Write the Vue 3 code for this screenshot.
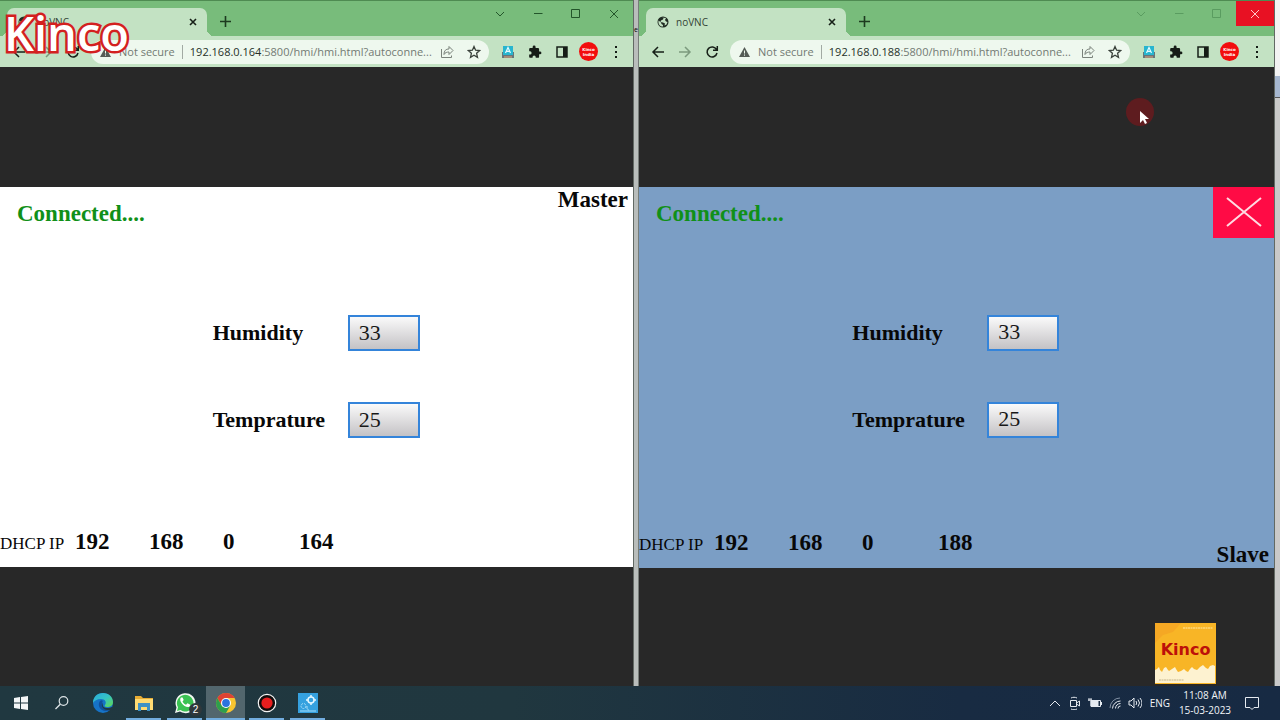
<template>
  <div class="desktop">
    <main class="workspace">
      <template v-for="win in windows" :key="win.id">
        <section class="window" :class="win.id">
          <header class="titlebar">
            <div class="tab">
              <svg class="favicon" viewBox="0 0 24 24">
                <circle cx="12" cy="12" r="11" fill="#202b22" />
                <path d="M3 9l5 4 1 3 3 2v3C6 21 2 17 3 9zM9 3l4 1-1 3-4 2-1 3 5 1 4 2-1 4 4-2 2-5-3-1-2-3 2-4z" fill="#c3e2c3" />
              </svg>
              <span class="tab-title">noVNC</span>
              <button class="tab-close" aria-label="Close tab">
                <svg width="8" height="8" viewBox="0 0 8 8"><path d="M1 1l6 6M7 1l-6 6" stroke="#172018" stroke-width="1.6" /></svg>
              </button>
            </div>
            <button class="new-tab" aria-label="New tab">
              <svg width="11" height="11" viewBox="0 0 11 11"><path d="M5.5 0v11M0 5.5h11" stroke="#1d3a1f" stroke-width="1.6" /></svg>
            </button>
            <div class="controls">
              <button aria-label="Search tabs"><svg width="12" height="12" viewBox="0 0 12 12"><path d="M2 4l4 4 4-4" /></svg></button>
              <button aria-label="Minimize"><svg width="12" height="12" viewBox="0 0 12 12"><path d="M2 5.500h8.500" /></svg></button>
              <button aria-label="Maximize"><svg width="12" height="12" viewBox="0 0 12 12"><path d="M1.500 1.500h8v8h-8z" /></svg></button>
              <button class="close" aria-label="Close"><svg width="12" height="12" viewBox="0 0 12 12"><path d="M2 2l8 8M10 2l-8 8" /></svg></button>
            </div>
          </header>

          <nav class="toolbar">
            <button class="tool" aria-label="Back">
              <svg width="14" height="14" viewBox="0 0 14 14"><path d="M13 7H2M7 2L2 7l5 5" /></svg>
            </button>
            <button class="tool dim" aria-label="Forward">
              <svg width="14" height="14" viewBox="0 0 14 14"><path d="M1 7h11M7 2l5 5-5 5" /></svg>
            </button>
            <button class="tool" aria-label="Reload">
              <svg width="14" height="14" viewBox="0 0 14 14"><path d="M11.500 4.500A5 5 0 1 0 12 8M12.300 1v4.300H8" /></svg>
            </button>
            <div class="omnibox">
              <svg class="warn" width="11" height="10" viewBox="0 0 11 10"><path d="M5.500 0L11 10H0z" fill="#555c56" /><path d="M5.500 3.500v3M5.500 7.500v1.200" stroke="#eef8ee" /></svg>
              <span class="insecure">Not secure</span>
              <span class="url"><b>{{ win.ip }}</b>:5800/hmi/hmi.html?autoconne...</span>
              <button aria-label="Share">
                <svg width="14" height="14" viewBox="0 0 14 14"><path d="M1.500 4v8.500h10v-2M4 9.500c0-4 2-5.500 5-5.500V1.500l4 4-4 4V7C7 7 5 7.500 4 9.500z" /></svg>
              </button>
              <button aria-label="Bookmark">
                <svg width="14" height="14" viewBox="0 0 14 14"><path class="star" d="M7 1.500l1.600 3.700 4 .4-3 2.700.9 4L7 10.200l-3.500 2.100.9-4-3-2.700 4-.4z" /></svg>
              </button>
            </div>
            <button class="tool" aria-label="Extension">
              <svg width="14" height="14" viewBox="0 0 14 14">
                <path d="M1 7h12v6H1z" fill="#66757a" />
                <path d="M3 11h8v2H3z" fill="#a58c78" />
                <path d="M2 1h10v9H2z" fill="#27b5cf" />
                <path d="M4.500 8L7 2.500 9.500 8M5.300 6.300h3.400" fill="none" stroke="#e6fbff" stroke-width="1.200" />
              </svg>
            </button>
            <button class="tool" aria-label="Extensions">
              <svg width="14" height="14" viewBox="0 0 24 24"><path d="M20.500 11H19V7a2 2 0 0 0-2-2h-4V3.500a2.500 2.500 0 0 0-5 0V5H4a2 2 0 0 0-2 2v3.800h1.500a2.700 2.700 0 0 1 0 5.400H2V20c0 1.100.9 2 2 2h3.800v-1.500a2.700 2.700 0 0 1 5.400 0V22H17a2 2 0 0 0 2-2v-4h1.500a2.500 2.500 0 0 0 0-5z" fill="#151c16" /></svg>
            </button>
            <button class="tool" aria-label="Side panel">
              <svg width="14" height="14" viewBox="0 0 14 14"><path d="M2 2h10v10H2z" /><path d="M8 2h4v10H8z" fill="#151c16" /></svg>
            </button>
            <button class="tool" aria-label="Profile">
              <span class="avatar">Kinco<br>India</span>
            </button>
            <button class="tool" aria-label="Menu">
              <svg width="14" height="14" viewBox="0 0 14 14"><path d="M6 1h2v2H6zM6 6h2v2H6zM6 11h2v2H6z" fill="#151c16" /></svg>
            </button>
          </nav>

          <div class="viewport">
            <div class="hmi">
              <p class="status">Connected....</p>
              <form class="readings" @submit.prevent>
                <template v-for="field in win.fields" :key="field.name">
                  <label :for="win.id + field.name">{{ field.name }}</label>
                  <input :id="win.id + field.name" v-model="field.value" type="text">
                </template>
              </form>
              <div class="dhcp">
                <span class="dhcp-label">DHCP IP</span>
                <span v-for="(octet, i) in win.ip.split('.')" :key="i">{{ octet }}</span>
              </div>
              <strong class="role">{{ win.role }}</strong>
              <button v-if="win.id === 'slave'" class="exit" aria-label="Exit">
                <svg width="38" height="32" viewBox="0 0 38 32"><path d="M2 2l34 28M36 2L2 30" stroke="#ffdbe2" stroke-width="2" /></svg>
              </button>
            </div>
          </div>
        </section>
        <div class="gutter" :class="win.id + '-gutter'"><span v-if="win.id === 'master'">e</span></div>
      </template>
    </main>

    <footer class="taskbar">
      <button class="app" aria-label="Start">
        <svg width="16" height="16" viewBox="0 0 16 16"><path d="M1 3l6-1v5.500H1zM8 1.900L15 1v6.500H8zM1 8.500h6V14l-6-1zM8 8.500h7V15l-7-.9z" fill="#f3f6f7" /></svg>
      </button>
      <button class="app" aria-label="Search">
        <svg width="16" height="16" viewBox="0 0 16 16"><circle cx="9.500" cy="6" r="4.300" fill="none" stroke="#dfe6e8" stroke-width="1.200" /><path d="M6.300 9.200L1.500 14" stroke="#dfe6e8" stroke-width="1.300" /></svg>
      </button>
      <button class="app" aria-label="Edge">
        <svg width="22" height="22" viewBox="0 0 22 22">
          <defs>
            <linearGradient id="edgeTop" x1="0" y1="0" x2="1" y2="1"><stop offset="0" stop-color="#28a9dd" /><stop offset=".5" stop-color="#35c3c4" /><stop offset="1" stop-color="#62d94c" /></linearGradient>
          </defs>
          <circle cx="11" cy="11" r="10" fill="#1673c7" />
          <path d="M1 11C1 5 5 1 11 1s10 4 10 9c0 4-3 5-6 5-2 0-3-1-2-2 2-3 0-6-4-6-4 0-7 2-8 4z" fill="url(#edgeTop)" />
          <path d="M8 9c-3 4 0 10 6 10 2 0 4-1 5-2-4 1-9-1-9-5 0-1 0-2 1-3-1-1-2-1-3 0z" fill="#104f9c" />
          <path d="M11 10c-1 3 0 6 4 6 2 0 4-.5 5-1l2 2-3 1c-5 1-10-2-9-6z" fill="#203843" />
        </svg>
      </button>
      <button class="app open" aria-label="File Explorer">
        <svg width="20" height="18" viewBox="0 0 20 18"><path d="M1 2h6l2 2h10v12H1z" fill="#e7ad35" /><path d="M1 5h18v11H1z" fill="#ffdb73" /><path d="M4 9h12v8h-3v-4H7v4H4z" fill="#3f91c5" /></svg>
      </button>
      <button class="app open" aria-label="WhatsApp">
        <svg width="22" height="22" viewBox="0 0 22 22"><path d="M1 21l1.500-5.500A10 10 0 1 1 6 19.500z" fill="#f3f8f3" /><path d="M3 19l1-3.700A8.300 8.300 0 1 1 6.500 18z" fill="#3bc253" /><path d="M7 5.500c-3 3 3 10 7.500 9.500 1.500-.3 2-1.500 1.800-2.300L13.500 11.200l-1.500 1.600c-1.500-.6-2.800-1.800-3.500-3.300l1.200-1.400L8.600 5.500z" fill="#fff" /></svg>
        <span class="count">2</span>
      </button>
      <button class="app open active" aria-label="Chrome">
        <svg width="20" height="20" viewBox="0 0 20 20">
          <circle cx="10" cy="10" r="10" fill="#f8c530" />
          <path d="M1.340 5A10 10 0 0 1 18.660 5H10L5.670 12.500z" fill="#df4334" />
          <path d="M1.340 5A10 10 0 0 0 10 20l4.330-7.500H5.670z" fill="#2e9f4d" />
          <circle cx="10" cy="10" r="5" fill="#fff" /><circle cx="10" cy="10" r="3.900" fill="#2b73df" />
        </svg>
      </button>
      <button class="app open" aria-label="Recorder">
        <svg width="20" height="20" viewBox="0 0 20 20"><circle cx="10" cy="10" r="8.700" fill="#110c0c" stroke="#f5f5f5" stroke-width="1.200" /><circle cx="10" cy="10" r="5.600" fill="#e81e1e" /></svg>
      </button>
      <button class="app open" aria-label="HMI tool">
        <svg width="20" height="20" viewBox="0 0 20 20">
          <path d="M0 0h20v20H0z" fill="#35a1df" />
          <circle cx="13" cy="7" r="3" fill="none" stroke="#e4f7ff" stroke-width="1.500" />
          <path d="M13 2v2M13 10v2M8 7h2M16 7h2" stroke="#e4f7ff" stroke-width="1.500" />
          <circle cx="5.500" cy="13" r="2.500" fill="none" stroke="#a5dcf8" stroke-dasharray="2 1" />
          <path d="M9 13v2c0 1 1 2 2 2M2 18h16" fill="none" stroke="#a5dcf8" />
        </svg>
      </button>

      <div class="tray">
        <button aria-label="Show hidden icons"><svg width="14" height="14" viewBox="0 0 14 14"><path d="M2 10l5-5 5 5" /></svg></button>
        <button aria-label="Meet now"><svg width="14" height="14" viewBox="0 0 14 14"><path d="M2.500 4.500h6v6h-6zM8.500 7l3-2v5l-3-2M3 2c2-1 4-1 6 0M3 13c2 1 4 1 6 0" /></svg></button>
        <button aria-label="Battery"><svg width="14" height="14" viewBox="0 0 14 14"><path d="M3 4.500h9.500v6H3zM13.500 6v3M1 2v3M3 2v3M0 4h4" /><path class="charge" d="M3 5h7v5H3z" /></svg></button>
        <button aria-label="Network"><svg width="14" height="14" viewBox="0 0 14 14"><path class="weak" d="M2 12A10 10 0 0 1 12 2" /><path d="M4.500 12.500A8 8 0 0 1 12.500 5M7.500 12.500a5 5 0 0 1 5-5M10 12.500a2.500 2.500 0 0 1 2.500-2.500" /></svg></button>
        <button aria-label="Volume"><svg width="14" height="14" viewBox="0 0 14 14"><path d="M1 5h2l3-3v10L3 9H1zM8 5q1.500 2 0 4M10 3.500q3 3.500 0 7M12 2q4 5 0 10" /></svg></button>
        <span class="lang">ENG</span>
        <time class="clock">11:08 AM<br>15-03-2023</time>
        <button class="notify" aria-label="Notifications"><svg width="16" height="16" viewBox="0 0 16 16"><path d="M1.500 2.500h13v10H10l-2 2-2-2H1.500z" /></svg></button>
      </div>
    </footer>

    <div class="watermark">Kinco</div>
    <div class="badge">
      <svg viewBox="0 0 61 61">
        <path d="M0 0h61v61H0z" fill="#f8b526" />
        <path d="M0 0h26l-8 9-10 3-8 8z" fill="#f5a824" />
        <path d="M0 47l2-1 2-2 1 3 2 2 2-4 2-1 2 3 1 1 3-2 3-2 1 2 2 3 3-1 3-2 2 2 2 1 2-3 2-2 2 2 3 1 3-3 3-2 3 3 2 1 2-3 3-1 2 1v17H0z" fill="#fdf2d0" />
        <path d="M28 5h30" stroke="#ffe8a2" stroke-dasharray="2 .5" />
        <path d="M4 57h25" stroke="#c7b68c" stroke-dasharray="2 .5" />
      </svg>
      <span>Kinco</span>
    </div>
    <div class="pointer">
      <svg width="28" height="28" viewBox="0 0 28 28"><path d="M14 13v12l3-3 2 4 2-1-2-4h4z" fill="#fff" /></svg>
    </div>
  </div>
</template>

<script setup>
import { reactive } from 'vue';

const makeFields = () => [
  { name: 'Humidity', value: '33' },
  { name: 'Temprature', value: '25' },
];

const windows = reactive([
  { id: 'master', role: 'Master', ip: '192.168.0.164', fields: makeFields() },
  { id: 'slave', role: 'Slave', ip: '192.168.0.188', fields: makeFields() },
]);
</script>

<style>
body {
  margin: 0;
  background: #282828;
}
</style>

<style scoped>
.desktop {
  position: relative;
  display: flex;
  flex-direction: column;
  min-height: 100vh;
  overflow: hidden;
  font-family: "Open Sans", "Noto Sans", sans-serif;
}

button {
  display: flex;
  align-items: center;
  justify-content: center;
  padding: 0;
  border: 0;
  background: none;
}

svg {
  display: block;
  flex: none;
}

.workspace {
  flex: 1;
  display: grid;
  grid-template-columns: 633fr 6px 635fr 6px;
}

.window {
  display: flex;
  flex-direction: column;
  min-width: 0;
}

.titlebar {
  display: flex;
  height: 36px;
  box-sizing: border-box;
  padding-left: 7px;
  border-top: 1px solid #4f8b52;
  background: #78bc7b;
}

.tab {
  position: relative;
  display: flex;
  align-items: center;
  width: 200px;
  height: 28px;
  margin-top: 7px;
  box-sizing: border-box;
  padding: 0 9px 0 11px;
  border-radius: 7px 7px 0 0;
  background: #c3e2c3;
}

.tab::before,
.tab::after {
  content: "";
  position: absolute;
  bottom: 0;
  width: 7px;
  height: 7px;
}

.tab::before {
  right: 100%;
  background: radial-gradient(circle at 0 0, #78bc7b 7px, #c3e2c3 7px);
}

.tab::after {
  left: 100%;
  background: radial-gradient(circle at 100% 0, #78bc7b 7px, #c3e2c3 7px);
}

.favicon {
  width: 12px;
  height: 12px;
}

.tab-title {
  flex: 1;
  margin-left: 7px;
  font-size: 10px;
  color: #334435;
}

.tab-close {
  width: 10px;
  height: 20px;
}

.new-tab {
  width: 20px;
  height: 28px;
  margin: 6px 0 0 8px;
}

.controls {
  display: flex;
  margin-left: auto;
}

.controls button {
  width: 38px;
  height: 25px;
}

.controls path {
  fill: none;
  stroke: #23552a;
}

.slave .controls path {
  stroke: #5a9c60;
}

.slave .controls .close {
  background: #e81123;
}

.slave .controls .close path {
  stroke: #ffc7cb;
}

.toolbar {
  display: flex;
  align-items: center;
  height: 31px;
  padding: 0 4px 0 5px;
  background: #c3e2c3;
}

.tool {
  width: 27px;
  height: 27px;
}

.tool path:not([fill]) {
  fill: none;
  stroke: #172018;
  stroke-width: 1.5;
}

.dim path:not([fill]) {
  stroke: #7c9a7e;
}

.omnibox {
  flex: 1;
  display: flex;
  align-items: center;
  min-width: 0;
  height: 24px;
  margin: 0 5px;
  padding: 0 2px 0 9px;
  border-radius: 12px;
  background: #eef8ee;
  font-size: 11px;
  color: #727a73;
  white-space: nowrap;
}

.insecure {
  margin-left: 8px;
  padding-right: 7px;
  border-right: 1px solid #a2aaa3;
  line-height: 14px;
}

.url {
  flex: 1;
  min-width: 0;
  margin-left: 7px;
}

.url b {
  font-weight: 400;
  color: #253028;
}

.omnibox button {
  width: 27px;
  height: 24px;
}

.omnibox button path {
  fill: none;
  stroke: #7a827b;
}

.omnibox button .star {
  stroke: #3a423b;
  stroke-width: 1.3;
}

.avatar {
  display: flex;
  align-items: center;
  justify-content: center;
  width: 19px;
  height: 19px;
  border-radius: 50%;
  background: #f20d0d;
  font: 700 4px/5px "DejaVu Sans", sans-serif;
  color: #fff;
}

.viewport {
  flex: 1;
  display: flex;
  flex-direction: column;
  justify-content: center;
  padding-top: 1px;
  background: #282828;
}

.hmi {
  position: relative;
  aspect-ratio: 5 / 3;
  display: flex;
  flex-direction: column;
  background: #fff;
  font-family: "Liberation Serif", serif;
  font-weight: 700;
  color: #080808;
}

.slave .hmi {
  background: #7b9ec5;
}

.status {
  margin: 14px 0 0 17px;
  font-size: 23px;
  line-height: 26px;
  color: #109018;
}

.readings {
  display: grid;
  grid-template-columns: 135px 72px;
  row-gap: 51px;
  align-items: center;
  margin: 88px 0 auto 33.6%;
  font-size: 22px;
}

.readings input {
  width: 72px;
  height: 36px;
  box-sizing: border-box;
  padding: 0 0 1px 9px;
  border: 2px solid #3484da;
  background: linear-gradient(#fafafa, #c4c2c5);
  font: 400 22px "Liberation Serif", serif;
  color: #181818;
}

.dhcp {
  display: grid;
  grid-template-columns: 75px 74px 74px 76px auto;
  align-items: baseline;
  justify-content: start;
  margin-bottom: 10px;
  font-size: 23px;
  line-height: 26px;
}

.dhcp-label {
  font-size: 17px;
  font-weight: 400;
  white-space: nowrap;
}

.role {
  position: absolute;
  right: 5px;
  font-size: 23px;
  line-height: 26px;
}

.master .role {
  top: 0;
}

.slave .role {
  bottom: 0;
}

.exit {
  position: absolute;
  top: 0;
  right: 0;
  width: 61px;
  height: 51px;
  background: #ff0b45;
}

.gutter {
  box-sizing: border-box;
  border-left: 1px solid #626964;
  border-right: 1px solid #777d79;
  background: #b9bdbb;
  font-size: 7px;
  line-height: 60px;
}

.slave-gutter {
  border-right: 0;
  background: linear-gradient(#f3f3f3 76px, #a6b7d0 76px, #a6b7d0 97px, #555 97px, #555 98px, #c9c9c9 98px);
}

.taskbar {
  display: flex;
  height: 34px;
  background: linear-gradient(90deg, #203840, #20373f 40%, #182b42 75%, #172a43);
}

.app {
  position: relative;
  width: 35px;
  height: 34px;
  margin: 0 3px;
}

.app.open {
  box-shadow: inset 0 -2px #72addf;
}

.app.active {
  width: 39px;
  margin: 0 1px;
  background: #52666d;
}

.count {
  position: absolute;
  right: 0;
  bottom: 4px;
  width: 13px;
  border-radius: 50%;
  background: #30383b;
  font-size: 10px;
  line-height: 13px;
  color: #fff;
}

.tray {
  display: flex;
  align-items: center;
  margin-left: auto;
  font-size: 10px;
  line-height: 15px;
  color: #f1f4f7;
}

.tray button {
  width: 20px;
  height: 34px;
}

.tray path {
  fill: none;
  stroke: #e5eaf0;
}

.tray .charge {
  fill: #e5eaf0;
}

.tray .weak {
  stroke: #8291a3;
}

.lang {
  margin-left: 5px;
}

.clock {
  width: 70px;
  text-align: center;
}

.tray .notify {
  width: 24px;
  margin-right: 16px;
}

.watermark {
  position: absolute;
  top: 2px;
  left: 4px;
  font-size: 47px;
  font-weight: 600;
  line-height: 62px;
  color: #fff;
  -webkit-text-stroke: 5px #d3201f;
  paint-order: stroke fill;
}

.badge {
  position: absolute;
  right: 64px;
  bottom: 36px;
  width: 61px;
}

.badge span {
  position: absolute;
  top: 18px;
  left: 0;
  right: 0;
  text-align: center;
  font: 700 16px/18px "DejaVu Sans", sans-serif;
  color: #bd1009;
}

.pointer {
  position: absolute;
  top: 98px;
  left: 1126px;
  border-radius: 50%;
  background: #5e1c1f;
}
</style>
